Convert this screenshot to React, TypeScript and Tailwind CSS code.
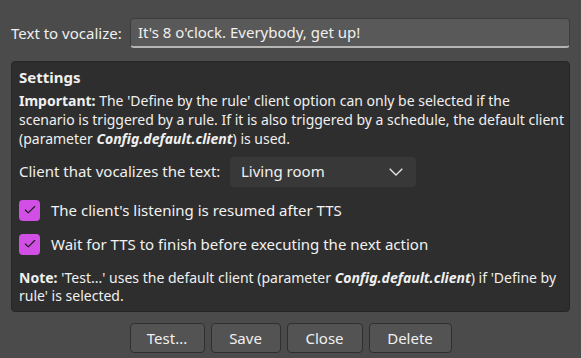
import { Check } from 'lucide-react'

const font = { fontFamily: '"Noto Sans", "Open Sans", sans-serif' }

function Checkbox({ label }: { label: string }) {
  return (
    <label className="flex h-[21px] items-center gap-[11px]">
      <span className="flex size-[21px] items-center justify-center rounded-[4px] bg-[#d24fe6]">
        <Check className="size-[14px] text-[#1a1a1a]" strokeWidth={2} />
      </span>
      <span className="text-[15px] leading-[21px] text-[#f2f2f2]">{label}</span>
    </label>
  )
}

function Button({ children, width }: { children: string; width: string }) {
  return (
    <button
      className={`h-[30px] rounded-[4px] border border-[#2f2f2f] bg-[#535353] text-[15px] text-[#f0f0f0] ${width}`}
    >
      {children}
    </button>
  )
}

export default function App() {
  return (
    <div
      className="flex h-[358px] w-[581px] flex-col bg-[#4b4b4b] px-[11px] pt-[18px] text-[#f0f0f0]"
      style={font}
    >
      <div className="flex items-center">
        <span className="w-[119px] text-[15px]">Text to vocalize:</span>
        <div className="flex h-[30px] flex-1 items-center rounded-[4px] border border-[#3d3d3d] border-b-2 border-b-[#b5b5b5] bg-[#595959] px-[7px] text-[15px]">
          It's 8 o'clock. Everybody, get up!
        </div>
      </div>

      <div className="mt-[13px] flex h-[251px] flex-col rounded-[4px] border border-[#262626] bg-[#2e2e2e] px-[7px] pt-[4px]">
        <div className="text-[15px] font-bold">Settings</div>
        <p className="mt-[2px] whitespace-nowrap text-[14px] leading-[19px]">
          <b>Important:</b> The 'Define by the rule' client option can only be selected if the
          <br />
          scenario is triggered by a rule. If it is also triggered by a schedule, the default client
          <br />
          (parameter <b><i>Config.default.client</i></b>) is used.
        </p>

        <div className="mt-[9px] flex items-center">
          <span className="w-[211px] text-[15px]">Client that vocalizes the text:</span>
          <div className="flex h-[30px] w-[186px] items-center justify-between rounded-[4px] bg-[#383838] pl-[11px] pr-[13px] text-[15px]">
            <span>Living room</span>
            <svg width="14" height="8" viewBox="0 0 14 8" fill="none">
              <path d="M0.7 0.7 7 7 13.3 0.7" stroke="#e6e6e6" strokeWidth="1.3" />
            </svg>
          </div>
        </div>

        <div className="mt-[13px] flex flex-col gap-[13px]">
          <Checkbox label="The client's listening is resumed after TTS" />
          <Checkbox label="Wait for TTS to finish before executing the next action" />
        </div>

        <p className="mt-[14px] whitespace-nowrap text-[14px] leading-[18px]">
          <b>Note:</b> 'Test...' uses the default client (parameter{' '}
          <b><i>Config.default.client</i></b>) if 'Define by
          <br />
          rule' is selected.
        </p>
      </div>

      <div className="mt-[11px] flex justify-center gap-[6px]">
        <Button width="w-[75px]">Test...</Button>
        <Button width="w-[70px]">Save</Button>
        <Button width="w-[76px]">Close</Button>
        <Button width="w-[83px]">Delete</Button>
      </div>
    </div>
  )
}
